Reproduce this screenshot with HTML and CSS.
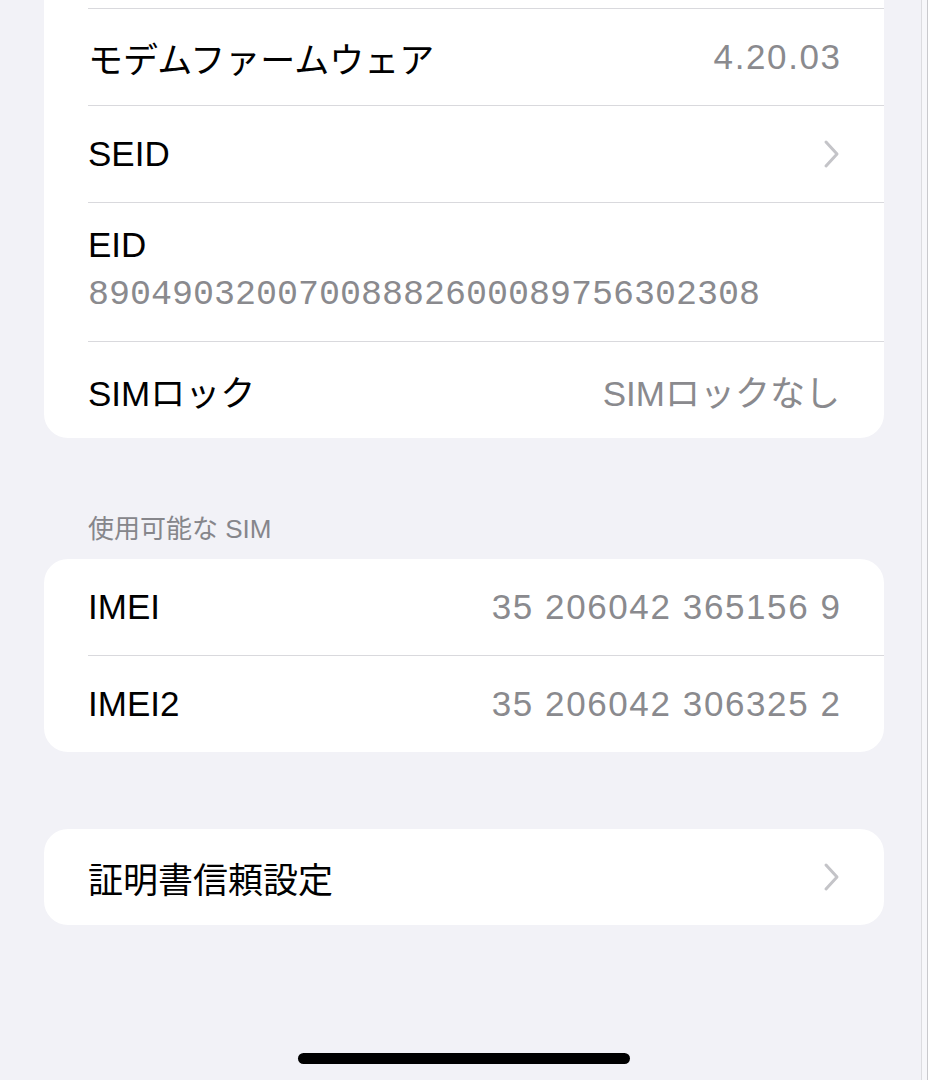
FILE: index.html
```html
<!DOCTYPE html>
<html lang="ja">
<head>
    <meta charset="UTF-8">
    <meta name="viewport" content="width=device-width, initial-scale=1.0">
    <title>情報</title>
    <link rel="stylesheet" href="styles.css">
</head>
<body>
    <div class="page">
        <div class="card card-top">
            <div class="row"></div>
            <div class="row">
                <span class="label">モデムファームウェア</span>
                <span class="value num">4.20.03</span>
            </div>
            <div class="row">
                <span class="label">SEID</span>
                <svg class="chevron" width="18" height="30" viewBox="0 0 18 30"><polyline points="4,3 15,15 4,27" /></svg>
            </div>
            <div class="row row-stack">
                <span class="label">EID</span>
                <span class="value mono">89049032007008882600089756302308</span>
            </div>
            <div class="row">
                <span class="label">SIMロック</span>
                <span class="value">SIMロックなし</span>
            </div>
        </div>

        <div class="section-title">使用可能な SIM</div>
        <div class="card">
            <div class="row">
                <span class="label">IMEI</span>
                <span class="value num">35 206042 365156 9</span>
            </div>
            <div class="row">
                <span class="label">IMEI2</span>
                <span class="value num">35 206042 306325 2</span>
            </div>
        </div>

        <div class="card card-gap">
            <div class="row">
                <span class="label">証明書信頼設定</span>
                <svg class="chevron" width="18" height="30" viewBox="0 0 18 30"><polyline points="4,3 15,15 4,27" /></svg>
            </div>
        </div>

        <div class="home-bar"></div>
    </div>
</body>
</html>
```

FILE: styles.css
```css
/* Ajustes - información */
body {
    margin: 0;
    min-height: 100vh;
    background: #f2f2f7;
    font-family: "Liberation Sans", "Noto Sans CJK JP", sans-serif;
    color: #000;
    overflow: hidden;
    box-shadow: inset -1px 0 0 #c9c9cd, inset -6px 0 0 #f7f7fa, inset -7px 0 0 #dcdce0;
}

.page {
    padding: 0 44px;
}

.card {
    background: #fff;
    border-radius: 24px;
    overflow: hidden;
}
.card-top {
    margin-top: -88px;
}
.card-gap {
    margin-top: 77px;
}

.row {
    display: flex;
    justify-content: space-between;
    align-items: center;
    height: 96px;
    margin-left: 44px;
    padding-right: 44px;
    border-bottom: 1px solid #d9d9dd;
    font-size: 35px;
}
.row:last-child {
    border-bottom: none;
}

.row-stack {
    flex-direction: column;
    align-items: flex-start;
    justify-content: flex-start;
    height: auto;
    padding-top: 21px;
    padding-bottom: 25px;
    gap: 8px;
}
.row-stack span {
    line-height: 42px;
}

.value {
    color: #8a8a8e;
}
.num {
    letter-spacing: 1.6px;
    margin-right: -1.6px;
}
.mono {
    font-family: "Liberation Mono", monospace;
    font-size: 35px;
}

.chevron polyline {
    fill: none;
    stroke: #c4c4c8;
    stroke-width: 3;
    stroke-linecap: round;
    stroke-linejoin: round;
}

.section-title {
    padding: 75px 0 14px 44px;
    font-size: 26px;
    line-height: 32px;
    color: #86868b;
}

.home-bar {
    width: 332px;
    height: 11px;
    margin: 128px auto 0;
    background: #000;
    border-radius: 6px;
}
```
